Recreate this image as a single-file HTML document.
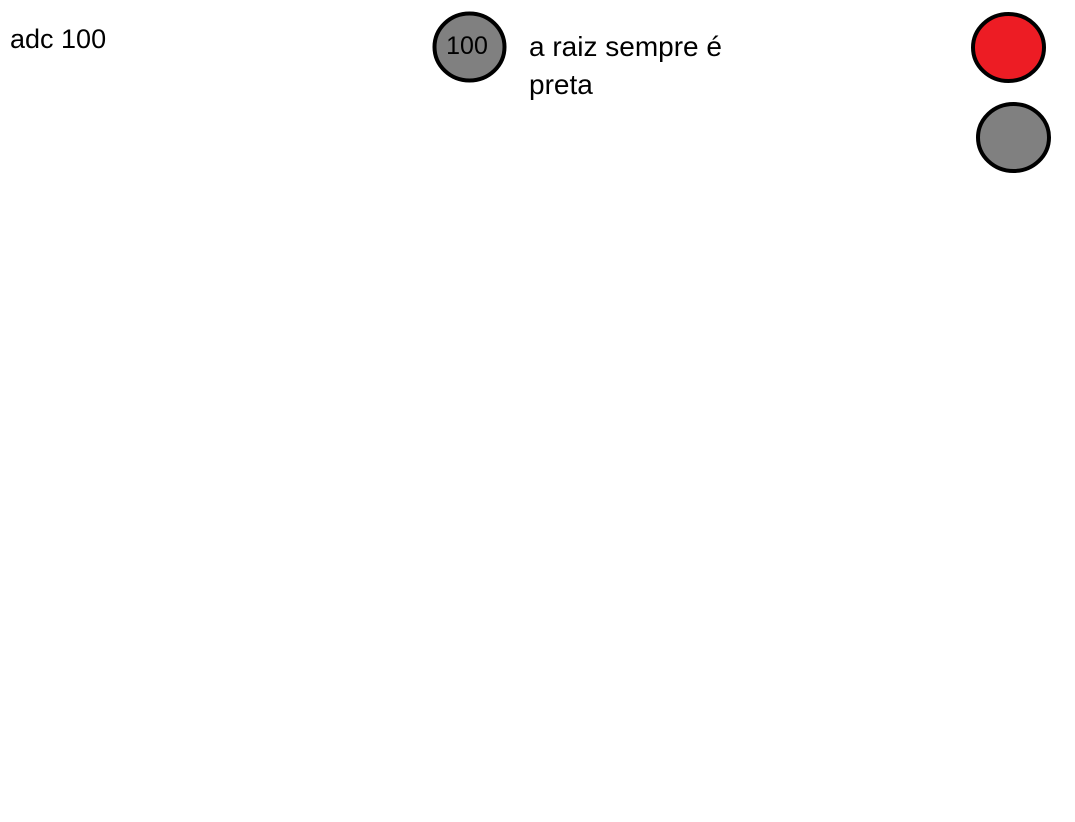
<!DOCTYPE html>
<html><head><style>
body{margin:0;width:1075px;height:822px;background:#fff;position:relative;overflow:hidden;font-family:"Liberation Sans",sans-serif;color:#000}
.t{position:absolute;white-space:nowrap}
</style></head><body>
<div class="t" style="left:10px;top:23px;font-size:27px;line-height:32px">adc 100</div>
<svg width="1075" height="822" style="position:absolute;left:0;top:0">
<ellipse cx="469.5" cy="47" rx="35" ry="33.5" fill="#808080" stroke="#000" stroke-width="4"/>
<text x="467" y="54" font-family="Liberation Sans" font-size="25" text-anchor="middle">100</text>
<ellipse cx="1008.5" cy="47.5" rx="35.5" ry="33.5" fill="#ed1c24" stroke="#000" stroke-width="4"/>
<ellipse cx="1013.5" cy="137.5" rx="35.5" ry="33.5" fill="#808080" stroke="#000" stroke-width="4"/>
</svg>
<div class="t" style="left:529px;top:28px;line-height:38px;font-size:28px">a raiz sempre é<br>preta</div>
</body></html>
